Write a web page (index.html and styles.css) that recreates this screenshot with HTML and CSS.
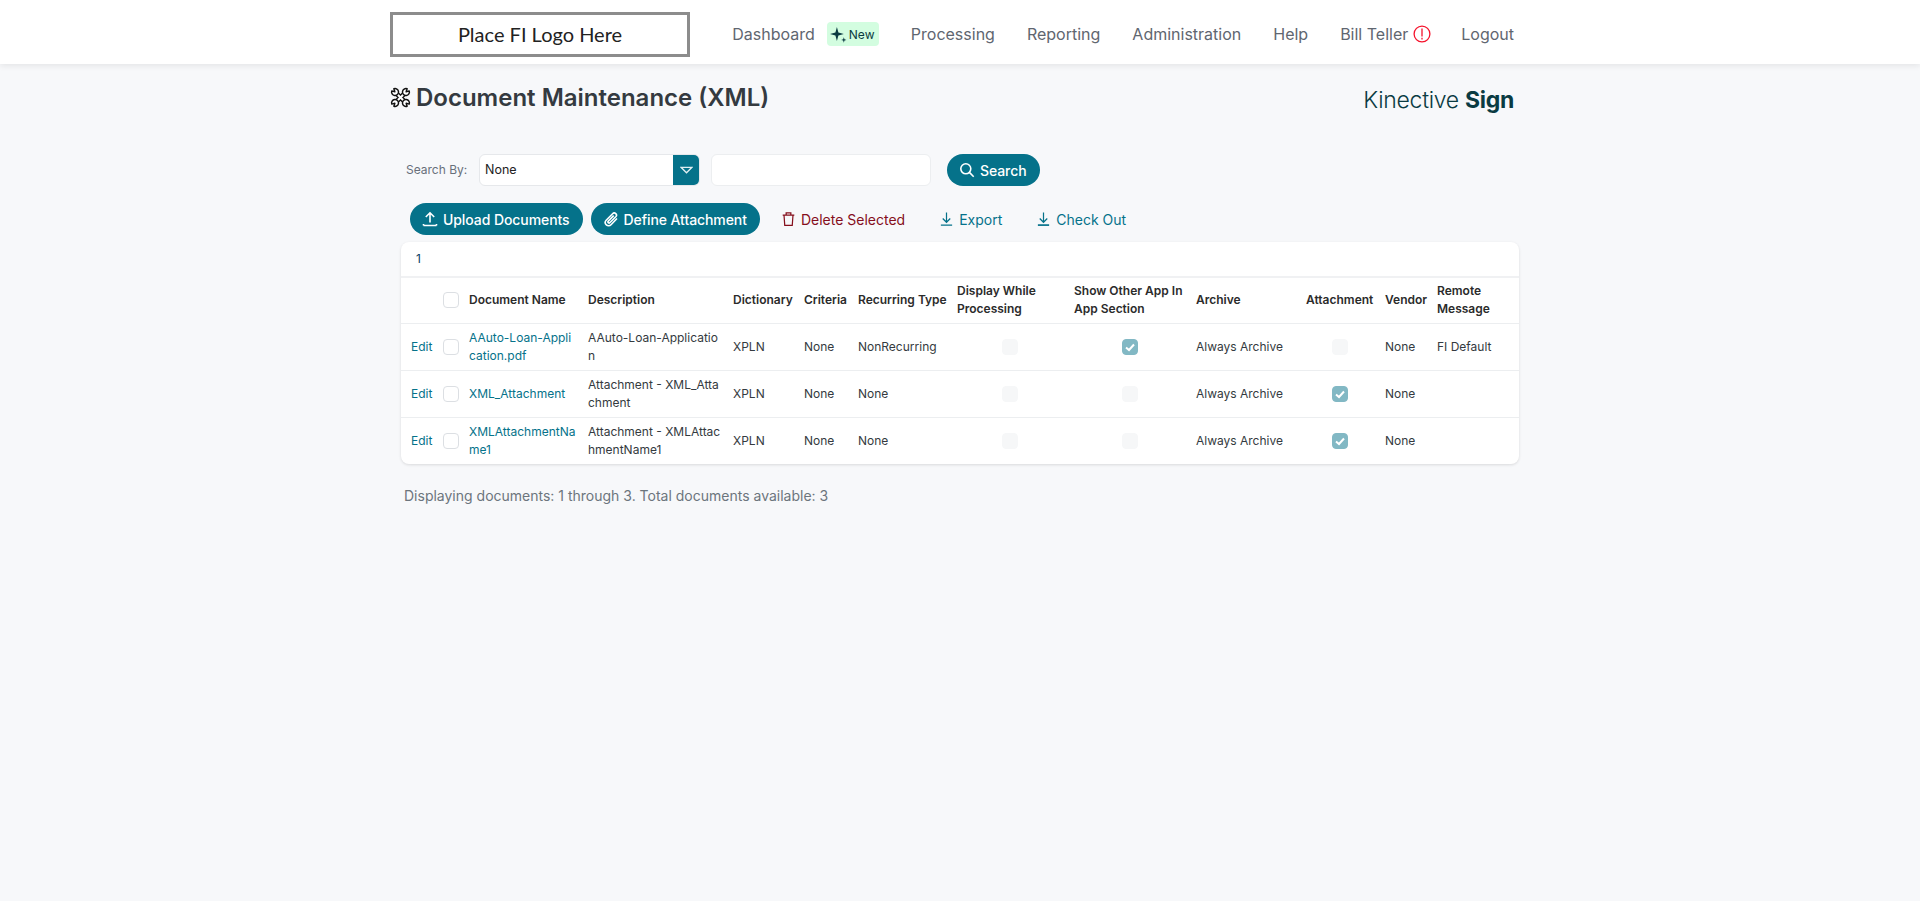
FILE: index.html
```html
<!DOCTYPE html>
<html lang="en">
<head>
  <meta charset="UTF-8">
  <title>Document Maintenance (XML)</title>
  <link rel="stylesheet" href="styles.css">
</head>
<body>
  <header class="top-bar">
    <div class="top-inner">
      <div class="logo-box">Place FI Logo Here</div>
      <nav class="main-nav">
        <span class="nav-group">
          <a class="nav-link">Dashboard</a>
          <span class="new-badge">
            <svg class="spark-icon" viewBox="0 0 16 16"><path d="M6.500 1 7.900 6.100 13 7.500 7.900 8.900 6.500 14 5.100 8.900 0 7.500 5.100 6.100z"/><path d="m13 10.500.6 2 1.900.6-1.900.6-.6 2-.6-2-1.900-.6 1.900-.6z"/></svg>
            New
          </span>
        </span>
        <a class="nav-link">Processing</a>
        <a class="nav-link">Reporting</a>
        <a class="nav-link">Administration</a>
        <a class="nav-link">Help</a>
        <span class="nav-user">
          <a class="nav-link">Bill Teller</a>
          <svg class="alert-icon" viewBox="0 0 18 18"><circle cx="9" cy="9" r="7.900"/><path d="M9 3.500v8M9 12.800v1.600"/></svg>
        </span>
        <a class="nav-link nav-logout">Logout</a>
      </nav>
    </div>
  </header>

  <main class="page">
    <div class="title-row">
      <h1 class="page-title">
        <svg class="tools-icon" viewBox="0 0 20 20">
          <path class="tool-edge" d="M5 5l10 10M15 5 5 15"/>
          <path class="tool-fill" d="M5 5l10 10M15 5 5 15"/>
          <path class="tool-head" d="M3.700 1.700A3.300 3.300 0 1 1 1.700 3.700L4.600 4.600z"/>
          <path class="tool-head" d="M16.300 1.700A3.300 3.300 0 1 0 18.300 3.700L15.400 4.600z"/>
          <path class="tool-head" d="M3.700 18.300A3.300 3.300 0 1 0 1.700 16.300L4.600 15.400z"/>
          <path class="tool-head" d="M16.300 18.300A3.300 3.300 0 1 1 18.300 16.300L15.400 15.400z"/>
        </svg>
        Document Maintenance (XML)
      </h1>
      <div class="brand">Kinective <b>Sign</b></div>
    </div>

    <div class="search-row">
      <label class="search-label">Search By:</label>
      <div class="select-box">
        <span class="select-value">None</span>
        <span class="select-arrow"><svg viewBox="0 0 12 7"><path d="M1 1h10L6 6z"/></svg></span>
      </div>
      <div class="search-input"></div>
      <button class="pill-btn search-btn">
        <svg class="btn-icon" viewBox="0 0 16 16"><circle cx="6.800" cy="6.800" r="5"/><path d="m10.400 10.400 4.300 4.300"/></svg>
        Search
      </button>
    </div>

    <div class="action-row">
      <button class="pill-btn">
        <svg class="btn-icon" viewBox="0 0 16 16"><path d="M8 11.500V2M3.800 6 8 1.800 12.200 6M1.500 14.500h13M1.500 14.500v-1.500M14.500 14.500v-1.500"/></svg>
        Upload Documents
      </button>
      <button class="pill-btn">
        <svg class="btn-icon" viewBox="0 0 16 16"><path d="m14 7.500-6 6.200a3.200 3.200 0 0 1-4.800-4.500l6.400-6.500a2.200 2.200 0 0 1 3.200 3.100L6.800 11.700a1.100 1.100 0 0 1-1.600-1.500l5.500-5.600"/></svg>
        Define Attachment
      </button>
      <a class="text-btn delete-btn">
        <svg class="link-icon" viewBox="0 0 16 16"><path d="M1.800 3.800h12.400M5.500 3.800V1.500h5v2.300M3.200 3.800l.8 11h8l.8-11"/></svg>
        Delete Selected
      </a>
      <a class="text-btn export-btn">
        <svg class="link-icon" viewBox="0 0 16 16"><path d="M8 1V11M4 7.500 8 11.500l4-4M2 14.500h12"/></svg>
        Export
      </a>
      <a class="text-btn checkout-btn">
        <svg class="link-icon" viewBox="0 0 16 16"><path d="M8 1V11M4 7.500 8 11.500l4-4"/><path class="thick" d="M2 14.500h12"/></svg>
        Check Out
      </a>
    </div>

    <section class="doc-card">
      <div class="pager">1</div>
      <table class="doc-table">
        <colgroup>
          <col class="c-edit"><col class="c-check"><col class="c-name"><col class="c-desc"><col class="c-dict"><col class="c-crit"><col class="c-rec"><col class="c-disp"><col class="c-show"><col class="c-arch"><col class="c-att"><col class="c-vend"><col class="c-rem">
        </colgroup>
        <thead>
          <tr>
            <th></th>
            <th><span class="check"></span></th>
            <th>Document Name</th>
            <th>Description</th>
            <th>Dictionary</th>
            <th>Criteria</th>
            <th>Recurring Type</th>
            <th>Display While Processing</th>
            <th>Show Other App In App Section</th>
            <th>Archive</th>
            <th>Attachment</th>
            <th>Vendor</th>
            <th>Remote Message</th>
          </tr>
        </thead>
        <tbody>
          <tr>
            <td><a class="doc-link">Edit</a></td>
            <td><span class="check"></span></td>
            <td class="wrap"><a class="doc-link">AAuto-Loan-Application.pdf</a></td>
            <td class="wrap">AAuto-Loan-Application</td>
            <td>XPLN</td>
            <td>None</td>
            <td>NonRecurring</td>
            <td class="mid"><span class="check off"></span></td>
            <td class="mid"><span class="check on"><svg viewBox="0 0 14 14"><path d="m3 7.500 3 2.500 5-5.500"/></svg></span></td>
            <td>Always Archive</td>
            <td class="mid"><span class="check off"></span></td>
            <td>None</td>
            <td>FI Default</td>
          </tr>
          <tr>
            <td><a class="doc-link">Edit</a></td>
            <td><span class="check"></span></td>
            <td class="wrap"><a class="doc-link">XML_Attachment</a></td>
            <td class="wrap">Attachment - XML_Attachment</td>
            <td>XPLN</td>
            <td>None</td>
            <td>None</td>
            <td class="mid"><span class="check off"></span></td>
            <td class="mid"><span class="check off"></span></td>
            <td>Always Archive</td>
            <td class="mid"><span class="check on"><svg viewBox="0 0 14 14"><path d="m3 7.500 3 2.500 5-5.500"/></svg></span></td>
            <td>None</td>
            <td></td>
          </tr>
          <tr>
            <td><a class="doc-link">Edit</a></td>
            <td><span class="check"></span></td>
            <td class="wrap"><a class="doc-link">XMLAttachmentName1</a></td>
            <td class="wrap">Attachment - XMLAttachmentName1</td>
            <td>XPLN</td>
            <td>None</td>
            <td>None</td>
            <td class="mid"><span class="check off"></span></td>
            <td class="mid"><span class="check off"></span></td>
            <td>Always Archive</td>
            <td class="mid"><span class="check on"><svg viewBox="0 0 14 14"><path d="m3 7.500 3 2.500 5-5.500"/></svg></span></td>
            <td>None</td>
            <td></td>
          </tr>
        </tbody>
      </table>
    </section>

    <p class="doc-count">Displaying documents: 1 through 3. Total documents available: 3</p>
  </main>
</body>
</html>
```

FILE: styles.css
```css
* { box-sizing: border-box; }
html, body { height: 100%; }
body {
  margin: 0; background: #f7f8fa; color: #343a40;
  font-family: Inter, "Liberation Sans", sans-serif; font-size: 12px;
}

/* top bar */
.top-bar { height: 64px; background: #fff; box-shadow: 0 2px 6px rgba(0,0,0,0.08); }
.top-inner { width: 1140px; margin: 0 auto; padding: 12px 16px 0 0; display: flex; }
.logo-box {
  width: 300px; height: 45px; padding-bottom: 2px; border: 3px solid #8c8c8c;
  display: flex; align-items: center; justify-content: center;
  font-family: Lato, sans-serif; font-size: 20px; color: #222;
}
.main-nav { margin-left: auto; height: 45px; padding-bottom: 1px; display: flex; align-items: center; gap: 32px; }
.nav-link { font-size: 16px; color: #5f6670; }
.nav-logout { margin-left: -2px; }
.nav-group { display: flex; align-items: center; gap: 12px; }
.new-badge {
  display: flex; align-items: center; gap: 2px; width: 52px; height: 24px; padding-left: 3px;
  background: #d3fde0; border-radius: 4px; color: #0a3b42; font-size: 12px; font-weight: 400;
}
.spark-icon { width: 17px; height: 17px; fill: #0a3b42; }
.nav-user { display: flex; align-items: center; gap: 5px; }
.alert-icon { width: 18px; height: 18px; fill: none; stroke: #f5112b; stroke-width: 1.300; }

/* page */
.page { width: 1140px; margin: 0 auto; padding-top: 17px; }
.title-row { display: flex; justify-content: space-between; height: 33px; padding-right: 16px; }
.page-title {
  margin: 0; display: flex; align-items: center; gap: 5px; height: 32px;
  font-size: 24px; font-weight: 600; color: #343a40;
}
.tools-icon { width: 21px; height: 21px; fill: none; stroke-linejoin: round; }
.tool-edge { stroke: #111; stroke-width: 4.400; }
.tool-fill { stroke: #fff; stroke-width: 2; }
.tool-head { fill: #fff; stroke: #111; stroke-width: 1.400; }
.brand { font-size: 23px; font-weight: 300; color: #0a3b42; padding-top: 5px; letter-spacing: -0.3px; }
.brand b { font-weight: 700; }

.search-row { display: flex; align-items: center; margin: 40px 0 0 16px; height: 32px; }
.search-label { width: 73px; font-size: 12px; color: #68707a; position: relative; top: -1px; }
.select-box {
  width: 221px; height: 32px; display: flex; justify-content: space-between; align-items: center;
  background: #fff; border: 1px solid #e6e8eb; border-radius: 6px; overflow: hidden; font-size: 12.500px;
}
.select-value { padding: 0 0 1px 5px; color: #222; }
.select-arrow { width: 26px; height: 32px; background: #05728a; display: flex; align-items: center; justify-content: center; }
.select-arrow svg { width: 13px; height: 8px; fill: none; stroke: #dfeef1; stroke-width: 1.200; }
.search-input { width: 220px; height: 32px; margin-left: 11px; background: #fff; border: 1px solid #eceef0; border-radius: 6px; }
.search-btn { margin-left: 16px; }

.pill-btn {
  height: 32px; padding: 0 13px 0 12px; border: none; border-radius: 16px;
  display: inline-flex; align-items: center; gap: 5px;
  background: #05728a; color: #fff; font-family: inherit; font-size: 14px; font-weight: 500; letter-spacing: -0.08px;
}
.btn-icon { width: 16px; height: 16px; fill: none; stroke: #fff; stroke-width: 1.600; }

.action-row { display: flex; align-items: center; gap: 8px; margin: 17px 0 0 20px; height: 32px; }
.text-btn { display: inline-flex; align-items: center; gap: 5px; font-size: 14px; }
.link-icon { width: 15px; height: 16px; fill: none; stroke: currentColor; stroke-width: 1.300; }
.link-icon .thick { stroke-width: 1.800; }
.delete-btn { color: #850f1c; margin-left: 13px; }
.export-btn { color: #05728a; margin-left: 26px; }
.checkout-btn { color: #05728a; margin-left: 26px; }

/* documents table */
.doc-card {
  margin: 7px 0 0 11px; width: 1118px; background: #fff; border-radius: 8px;
  box-shadow: 0 1px 3px rgba(0,0,0,0.12);
}
.pager { height: 36px; padding: 9px 15px 0; font-size: 12px; color: #0a3d62; border-bottom: 2px solid #f0f1f3; }
.doc-table { width: 100%; table-layout: fixed; border-collapse: collapse; line-height: 18px; }
.doc-table th, .doc-table td { padding: 0 3px; text-align: left; vertical-align: middle; color: #343a40; }
.doc-table th { height: 45px; font-size: 12px; font-weight: 600; color: #2b2b2b; }
.doc-table td { height: 47px; border-top: 1px solid #eceef0; }
.doc-table td.wrap { word-break: break-all; padding-right: 8px; }
.doc-table td.mid { padding-right: 8px; }
.mid .check { margin: 0 auto; }
.doc-table td:first-child { padding-left: 10px; }
.c-edit { width: 39px; }
.c-check { width: 26px; }
.c-name { width: 119px; }
.c-desc { width: 145px; }
.c-dict { width: 71px; }
.c-crit { width: 54px; }
.c-rec { width: 99px; }
.c-disp { width: 117px; }
.c-show { width: 122px; }
.c-arch { width: 110px; }
.c-att { width: 79px; }
.c-vend { width: 52px; }
.doc-link { color: #05728a; }
.check {
  display: block; width: 16px; height: 16px; background: #fff;
  border: 1px solid #dcdfe3; border-radius: 4px;
}
.check.off { background: #f6f7f8; border-color: #f6f7f8; }
.check.on { background: #82b8c4; border-color: #82b8c4; }
.check.on svg { display: block; width: 14px; height: 14px; fill: none; stroke: #fff; stroke-width: 2; }

.doc-count { margin: 22px 0 0 14px; font-size: 14px; color: #6c757d; line-height: 20px; }
```
